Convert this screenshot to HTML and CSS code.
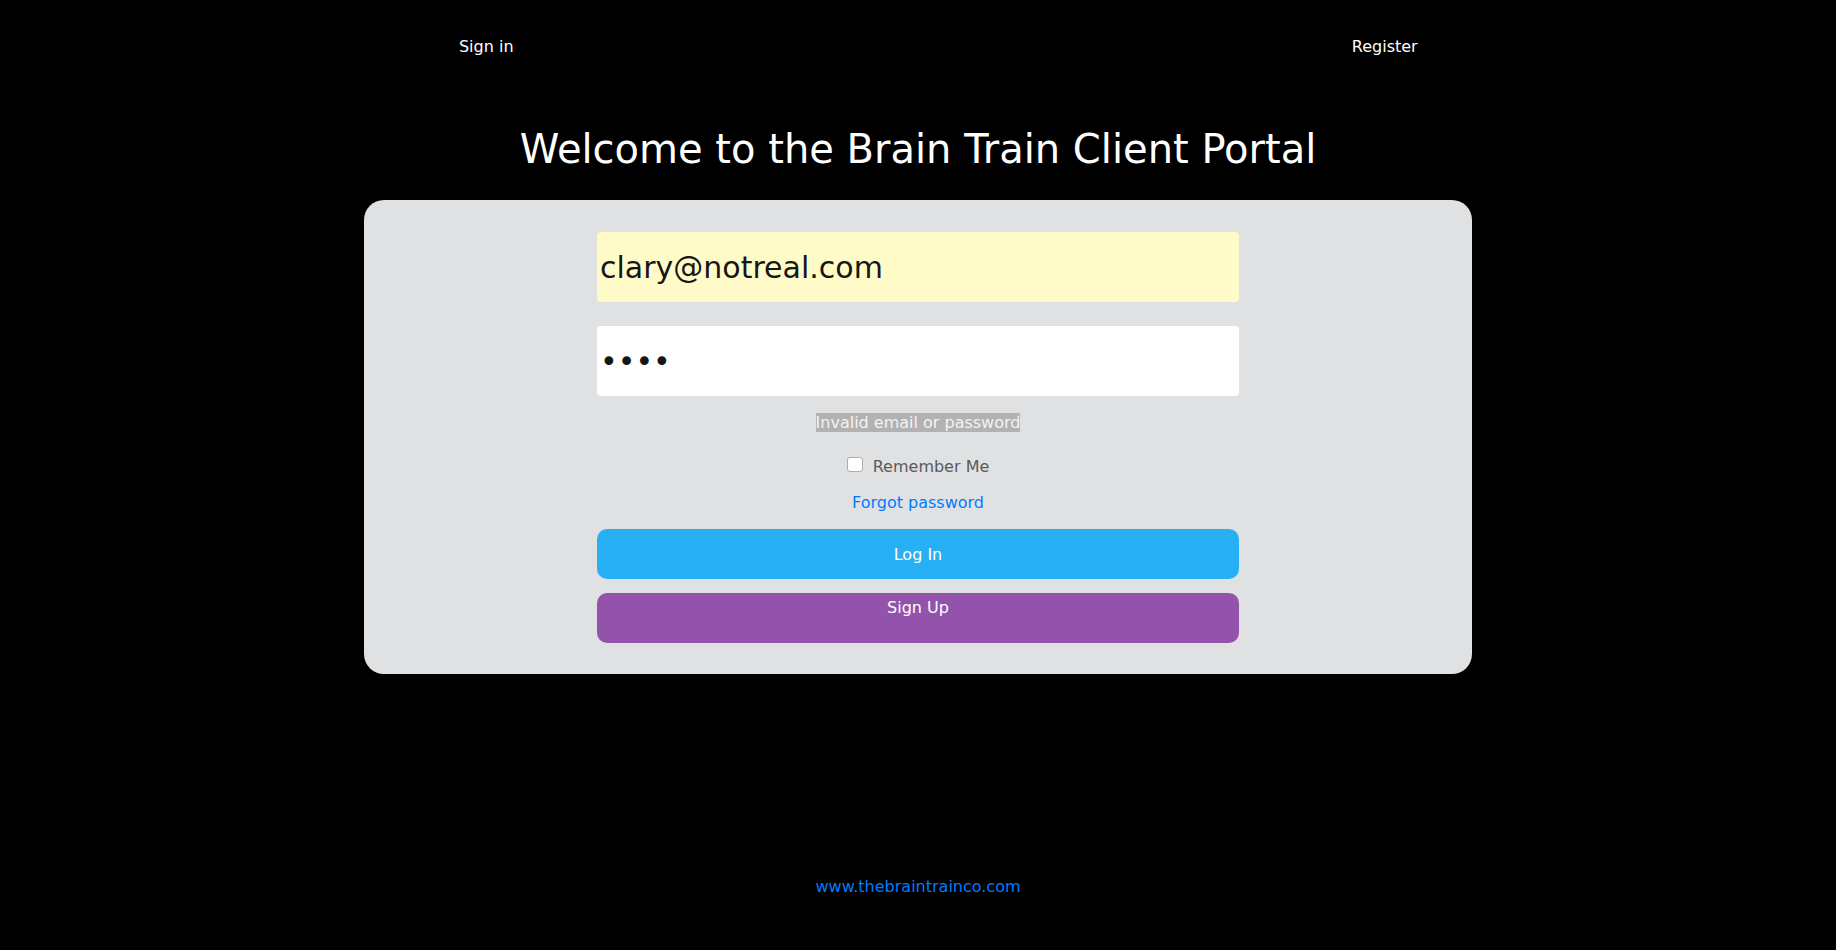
FILE: index.html
```html
<!DOCTYPE html>
<html lang="en">
<head>
<meta charset="utf-8">
<title>Brain Train Client Portal</title>
<link rel="stylesheet" href="styles.css">
</head>
<body>
  <nav class="topnav">
    <div class="nav-item"><a class="nav-link" href="#">Sign in</a></div>
    <div class="nav-item"><a class="nav-link" href="#">Register</a></div>
  </nav>

  <h1 class="title">Welcome to the Brain Train Client Portal</h1>

  <main class="card">
    <form class="login-form">
      <input class="field field-email" type="email" value="clary@notreal.com">
      <input class="field field-password" type="password" value="abcd">
      <div class="error-row"><span class="error">Invalid email or password</span></div>
      <label class="remember">
        <input class="check" type="checkbox">
        <span class="remember-text">Remember Me</span>
      </label>
      <div class="forgot-row"><a class="forgot" href="#">Forgot password</a></div>
      <button class="btn btn-login" type="button">Log In</button>
      <button class="btn btn-signup" type="button">Sign Up</button>
    </form>
  </main>

  <footer class="footer">
    <a class="footer-link" href="#">www.thebraintrainco.com</a>
  </footer>
</body>
</html>
```

FILE: styles.css
```css
* {
  box-sizing: border-box;
}

html, body {
  margin: 0;
  padding: 0;
}

body {
  background: #000;
  color: #fff;
  font-family: "DejaVu Sans", "Liberation Sans", sans-serif;
  font-size: 16px;
  min-height: 950px;
}

.topnav {
  display: grid;
  grid-template-columns: 1fr 1fr;
  padding: 37px 2px 0 37px;
  line-height: 19px;
}

.nav-item {
  text-align: center;
}

.nav-link {
  color: #fff;
  text-decoration: none;
}

.title {
  margin: 70px 0 0;
  font-size: 40px;
  font-weight: normal;
  line-height: 47px;
  text-align: center;
  color: #fff;
}

.card {
  width: 1108px;
  margin: 27px auto 0;
  padding: 32px 0 31px;
  background: #e0e1e3;
  border-radius: 20px;
}

.login-form {
  width: 642px;
  margin: 0 auto;
  display: flex;
  flex-direction: column;
}

.field {
  display: block;
  width: 642px;
  height: 70px;
  border: none;
  border-radius: 4px;
  padding: 0 3px;
  font-family: "DejaVu Sans", sans-serif;
  font-size: 30px;
  color: #161616;
  outline: none;
}

.field-email {
  background: #fffbc8;
}

.field-password {
  background: #fff;
  margin-top: 24px;
}

.error-row {
  margin-top: 17px;
  text-align: center;
  line-height: 19px;
}

.error {
  background: #b2b2b2;
  color: #f3f3f3;
}

.remember {
  margin-top: 25px;
  display: flex;
  justify-content: center;
  align-items: flex-start;
  line-height: 19px;
  color: #5a5a5a;
}

.check {
  appearance: none;
  -webkit-appearance: none;
  width: 16px;
  height: 15px;
  margin: 0 10px 0 0;
  background: #fff;
  border: 1px solid #b3aca7;
  border-radius: 3px;
}

.forgot-row {
  margin-top: 17px;
  text-align: center;
  line-height: 19px;
}

.forgot {
  color: #007bff;
  text-decoration: none;
}

.btn {
  display: block;
  width: 642px;
  height: 50px;
  border: none;
  border-radius: 10px;
  color: #fff;
  font-family: "DejaVu Sans", sans-serif;
  font-size: 16px;
  line-height: 19px;
  text-align: center;
}

.btn-login {
  margin-top: 17px;
  background: #28b0f4;
}

.btn-signup {
  margin-top: 14px;
  background: #9453ab;
  display: flex;
  justify-content: center;
  align-items: flex-start;
  padding-top: 5px;
}

.footer {
  margin-top: 203px;
  text-align: center;
  line-height: 19px;
}

.footer-link {
  color: #007bff;
  text-decoration: none;
}
```
